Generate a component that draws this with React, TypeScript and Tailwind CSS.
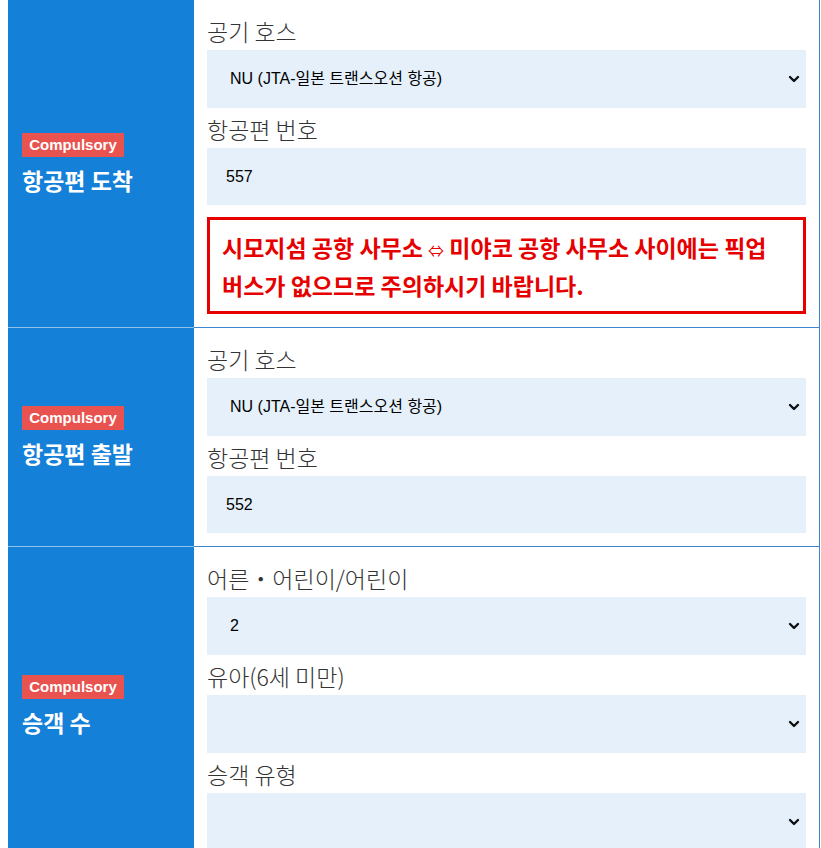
import type { ReactNode } from "react";

const kr = "font-['Noto_Sans_CJK_KR',sans-serif]";
const mixed = "font-['Liberation_Sans','Noto_Sans_CJK_KR',sans-serif]";

function Chevron() {
  return (
    <svg
      className="pointer-events-none absolute right-[6px] top-1/2 h-[10px] w-[12px] -translate-y-1/2"
      viewBox="0 0 12 10"
      fill="none"
      stroke="#111"
      strokeWidth="2.4"
      aria-hidden
    >
      <path strokeLinecap="round" strokeLinejoin="round" d="M2 3l4 4 4-4" />
    </svg>
  );
}

function Label({ children }: { children: ReactNode }) {
  return <p className={`${kr} h-[40px] pt-[7px] text-[23px] leading-[28px] font-light text-[#333]`}>{children}</p>;
}

function SelectBox({ value }: { value: string }) {
  return (
    <div className="relative">
      <select
        defaultValue={value}
        className={`${mixed} block h-[58px] w-full appearance-none bg-[#e5f0fa] pl-[23px] text-[16px] text-black outline-none`}
      >
        <option value={value}>{value}</option>
      </select>
      <Chevron />
    </div>
  );
}

function TextBox({ value }: { value: string }) {
  return (
    <input
      defaultValue={value}
      className={`${mixed} block h-[57px] w-full bg-[#e5f0fa] pl-[19px] text-[16px] text-black outline-none`}
    />
  );
}

function Row({ title, children, first }: { title: string; children: ReactNode; first?: boolean }) {
  return (
    <div className={`flex ${first ? "" : "border-t border-[#3b86cc]"}`}>
      <div className={`flex w-[186px] shrink-0 flex-col justify-center bg-[#1480d8] pl-[14px] ${first ? "" : "-mt-px border-t border-[#8ec0ec]"}`}>
        <span className={`${mixed} inline-block w-[102px] bg-[#e8524f] py-[2px] text-center text-[15px] leading-[20px] font-bold text-white`}>
          Compulsory
        </span>
        <h3 className={`${kr} mt-[8px] text-[23px] leading-[30px] font-bold text-white`}>{title}</h3>
      </div>
      <div className="flex-1 border-r border-[#3b86cc] px-[13px] pt-[10px] pb-[13px]">{children}</div>
    </div>
  );
}

export default function App() {
  return (
    <div className="min-h-[848px] bg-white pl-[8px] pr-[1px]">
      <Row title="항공편 도착" first>
        <Label>공기 호스</Label>
        <SelectBox value="NU (JTA-일본 트랜스오션 항공)" />
        <Label>항공편 번호</Label>
        <TextBox value="557" />
        <div className="mt-[12px] border-[3px] border-[#e60000] pt-[8px] pb-[7px] pl-[12px] pr-[8px]">
          <p className={`${kr} break-keep text-[23px] leading-[38px] font-bold text-[#e60000]`}>
            시모지섬 공항 사무소 <span className="text-[16px] leading-none font-normal">⇔</span> 미야코 공항 사무소 사이에는 픽업 버스가 없으므로 주의하시기 바랍니다.
          </p>
        </div>
      </Row>
      <Row title="항공편 출발">
        <Label>공기 호스</Label>
        <SelectBox value="NU (JTA-일본 트랜스오션 항공)" />
        <Label>항공편 번호</Label>
        <TextBox value="552" />
      </Row>
      <Row title="승객 수">
        <Label>어른・어린이/어린이</Label>
        <SelectBox value="2" />
        <Label>유아(6세 미만)</Label>
        <SelectBox value="" />
        <Label>승객 유형</Label>
        <SelectBox value="" />
      </Row>
    </div>
  );
}
